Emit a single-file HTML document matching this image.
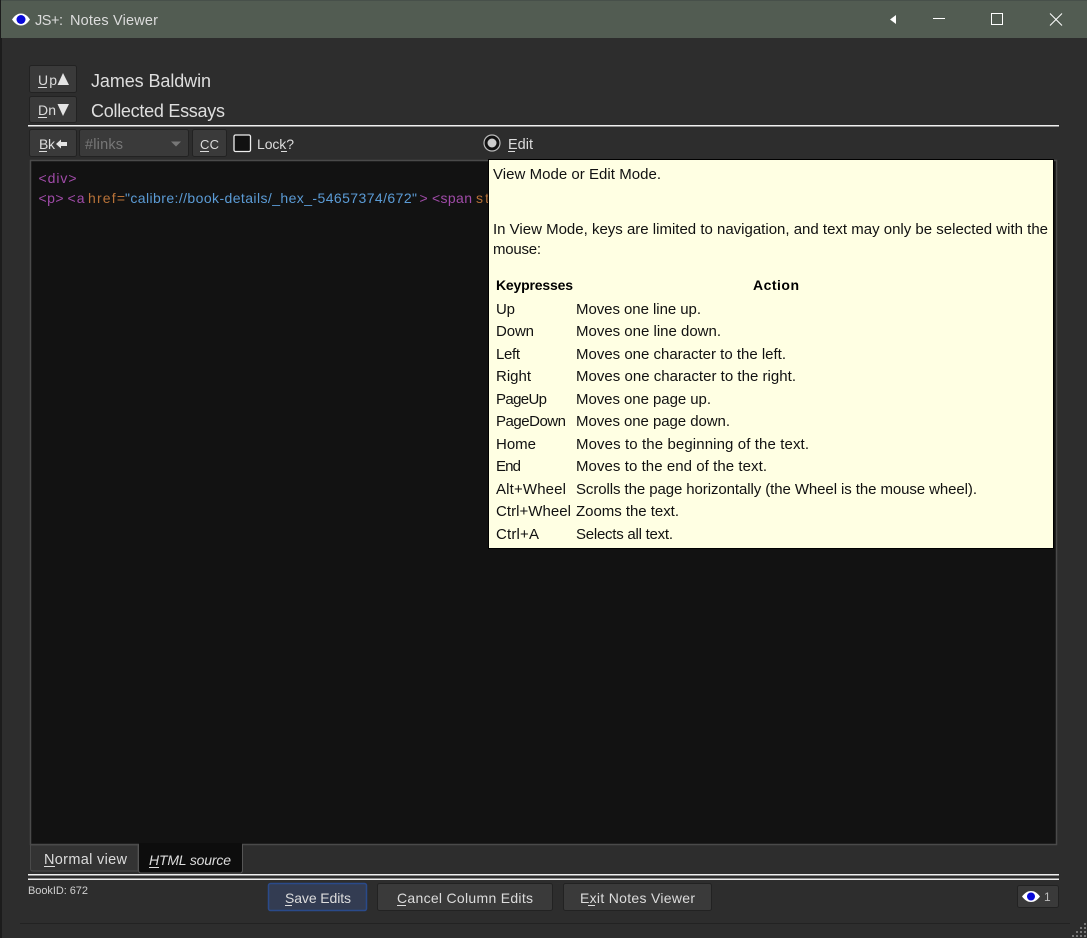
<!DOCTYPE html>
<html><head><meta charset="utf-8"><style>
html,body{margin:0;padding:0;background:#2d2d2d;width:1087px;height:938px;overflow:hidden}
svg{display:block;position:absolute;left:0;top:0}
text{font-family:"Liberation Sans",sans-serif;white-space:pre}
.b{fill:#3a3a3a;stroke:#222;stroke-width:1}
.t{fill:#dcdcdc;font-size:14.500px}
.s{font-size:14px}
.k{fill:#111;font-size:15px}
.c{font-size:14px}
</style></head><body>
<svg width="1087" height="938" viewBox="0 0 1087 938" xmlns="http://www.w3.org/2000/svg">
<rect width="1087" height="938" fill="#2d2d2d"/>
<rect x="0" y="0" width="2" height="938" fill="#1c1c1c"/>
<rect x="1" y="0" width="1086" height="38" fill="#525c52"/>
<rect x="1" y="0" width="1086" height="1" fill="#47504a"/>
<!-- title eye -->
<path d="M12 19.500C15 15 18 13.500 21 13.500C24 13.500 27 15 30 19.500C27 24 24 25.500 21 25.500C18 25.500 15 24 12 19.500Z" fill="#fff"/><circle cx="21" cy="19.500" r="4.500" fill="#0808d8"/>
<text x="35" y="25" class="t" textLength="28" lengthAdjust="spacing">JS+:</text>
<text x="70" y="25" class="t" textLength="88" lengthAdjust="spacing">Notes Viewer</text>
<path d="M890 19.500L896 15V24Z" fill="#fff"/>
<rect x="933" y="18" width="12" height="1" fill="#fff"/>
<rect x="991.500" y="13.500" width="11" height="11" fill="none" stroke="#fff" stroke-width="1"/>
<path d="M1050 13.500L1062 25.500M1062 13.500L1050 25.500" stroke="#fff" stroke-width="1" fill="none"/>

<!-- top buttons -->
<rect class="b" x="29.500" y="65.500" width="47" height="27" rx="2"/>
<text x="38" y="85" class="t s" textLength="19" lengthAdjust="spacing">Up</text><rect x="38" y="87" width="9" height="1" fill="#dcdcdc"/>
<path d="M57.500 85L63 73L69 85Z" fill="#e4e4e4"/>
<rect class="b" x="29.500" y="96.500" width="47" height="26" rx="2"/>
<text x="38" y="115" class="t s" textLength="18" lengthAdjust="spacing">Dn</text><rect x="38" y="117" width="9" height="1" fill="#dcdcdc"/>
<path d="M57.500 104L69 104L63 116Z" fill="#e4e4e4"/>
<text x="91" y="87" fill="#dedede" font-size="18" textLength="120" lengthAdjust="spacing">James Baldwin</text>
<text x="91" y="117" fill="#dedede" font-size="18" textLength="134" lengthAdjust="spacing">Collected Essays</text>
<rect x="28" y="125" width="1031" height="1.500" fill="#f0f0f0"/>

<!-- toolbar -->
<rect class="b" x="29.500" y="129.500" width="47" height="27" rx="2"/>
<text x="39" y="149" class="t s" textLength="16" lengthAdjust="spacing">Bk</text><rect x="39" y="151" width="8" height="1" fill="#dcdcdc"/>
<path d="M56 144L61 139.500V142H67V146H61V148.500Z" fill="#e4e4e4"/>
<rect class="b" x="79.500" y="129.500" width="109" height="27" rx="2"/>
<text x="85" y="149" class="t" style="fill:#777" textLength="38" lengthAdjust="spacing">#links</text>
<path d="M171 141.500H181L176 146.500Z" fill="#777"/>
<rect class="b" x="192.500" y="129.500" width="34" height="27" rx="2"/>
<text x="200" y="149" class="t" style="font-size:13px" textLength="19" lengthAdjust="spacing">CC</text><rect x="200" y="151" width="9" height="1" fill="#dcdcdc"/>
<rect x="234" y="135" width="16.500" height="16.500" rx="1.500" fill="#111" stroke="#eee" stroke-width="1.300"/>
<text x="257" y="149" class="t s" textLength="37" lengthAdjust="spacing">Lock?</text><rect x="281" y="151" width="6" height="1" fill="#dcdcdc"/>
<circle cx="492" cy="143" r="8" fill="#111" stroke="#bbb" stroke-width="1.200"/><circle cx="492" cy="143" r="4.500" fill="#ccc"/>
<text x="508" y="149" class="t" textLength="25" lengthAdjust="spacing">Edit</text><rect x="508" y="151" width="7" height="1" fill="#dcdcdc"/>

<!-- editor -->
<rect x="30.500" y="160.500" width="1026" height="684" fill="#121212" stroke="#4a4a4a" stroke-width="1.500"/>
<text x="38.500" y="183" class="c" fill="#a04ba8" textLength="38" lengthAdjust="spacing">&lt;div&gt;</text>
<text x="38.500" y="203" class="c" fill="#a04ba8" textLength="25" lengthAdjust="spacing">&lt;p&gt;</text>
<text x="67.500" y="203" class="c" fill="#a04ba8" textLength="17" lengthAdjust="spacing">&lt;a</text>
<text x="88" y="203" class="c" fill="#b87238" textLength="37" lengthAdjust="spacing">href=</text>
<text x="125" y="203" class="c" fill="#5b9bd5" textLength="292" lengthAdjust="spacing">"calibre://book-details/_hex_-54657374/672"</text>
<text x="419.500" y="203" class="c" fill="#a04ba8" textLength="8" lengthAdjust="spacing">&gt;</text>
<text x="432" y="203" class="c" fill="#a04ba8" textLength="40" lengthAdjust="spacing">&lt;span</text>
<text x="476" y="203" class="c" fill="#b87238" textLength="13" lengthAdjust="spacing">st</text>

<!-- tooltip -->
<rect x="488.500" y="159.500" width="565" height="389" fill="#ffffe3" stroke="#000" stroke-width="1"/>
<text x="493" y="179" class="k" textLength="168" lengthAdjust="spacing">View Mode or Edit Mode.</text>
<text x="493" y="234" class="k" textLength="555" lengthAdjust="spacing">In View Mode, keys are limited to navigation, and text may only be selected with the</text>
<text x="493" y="254" class="k" textLength="48" lengthAdjust="spacing">mouse:</text>
<text x="496" y="290" class="k" font-weight="bold" style="font-size:14px;fill:#000" textLength="77" lengthAdjust="spacing">Keypresses</text>
<text x="753" y="290" class="k" font-weight="bold" style="font-size:14px;fill:#000" textLength="46" lengthAdjust="spacing">Action</text>
<text x="496" y="314" class="k" textLength="19" lengthAdjust="spacing">Up</text>
<text x="576" y="314" class="k" textLength="125" lengthAdjust="spacing">Moves one line up.</text>
<text x="496" y="336" class="k" textLength="38" lengthAdjust="spacing">Down</text>
<text x="576" y="336" class="k" textLength="145" lengthAdjust="spacing">Moves one line down.</text>
<text x="496" y="359" class="k" textLength="24" lengthAdjust="spacing">Left</text>
<text x="576" y="359" class="k" textLength="210" lengthAdjust="spacing">Moves one character to the left.</text>
<text x="496" y="381" class="k" textLength="35" lengthAdjust="spacing">Right</text>
<text x="576" y="381" class="k" textLength="220" lengthAdjust="spacing">Moves one character to the right.</text>
<text x="496" y="404" class="k" textLength="51" lengthAdjust="spacing">PageUp</text>
<text x="576" y="404" class="k" textLength="135" lengthAdjust="spacing">Moves one page up.</text>
<text x="496" y="426" class="k" textLength="70" lengthAdjust="spacing">PageDown</text>
<text x="576" y="426" class="k" textLength="154" lengthAdjust="spacing">Moves one page down.</text>
<text x="496" y="449" class="k" textLength="40" lengthAdjust="spacing">Home</text>
<text x="576" y="449" class="k" textLength="233" lengthAdjust="spacing">Moves to the beginning of the text.</text>
<text x="496" y="471" class="k" textLength="25" lengthAdjust="spacing">End</text>
<text x="576" y="471" class="k" textLength="191" lengthAdjust="spacing">Moves to the end of the text.</text>
<text x="496" y="494" class="k" textLength="70" lengthAdjust="spacing">Alt+Wheel</text>
<text x="576" y="494" class="k" textLength="401" lengthAdjust="spacing">Scrolls the page horizontally (the Wheel is the mouse wheel).</text>
<text x="496" y="516" class="k" textLength="75" lengthAdjust="spacing">Ctrl+Wheel</text>
<text x="576" y="516" class="k" textLength="103" lengthAdjust="spacing">Zooms the text.</text>
<text x="496" y="539" class="k" textLength="43" lengthAdjust="spacing">Ctrl+A</text>
<text x="576" y="539" class="k" textLength="97" lengthAdjust="spacing">Selects all text.</text>

<!-- tabs -->
<path d="M30.500 845V869Q30.500 871 33 871H138V845Z" fill="#333" stroke="#4a4a4a"/>
<text x="44" y="864" class="t" textLength="83" lengthAdjust="spacing">Normal view</text><rect x="44" y="866" width="11" height="1" fill="#dcdcdc"/>
<path d="M138.500 845V870Q138.500 873 141 873H240Q242.500 873 242.500 870V845Z" fill="#0d0d0d" stroke="#555"/>
<rect x="139" y="843" width="103" height="3" fill="#0d0d0d"/>
<text x="149" y="865" class="t s" font-style="italic" textLength="82" lengthAdjust="spacing">HTML source</text><rect x="149" y="867" width="10" height="1" fill="#dcdcdc"/>

<!-- separators -->
<rect x="28" y="874" width="1031" height="1.500" fill="#f0f0f0"/>
<rect x="28" y="878.500" width="1031" height="1.500" fill="#f0f0f0"/>
<text x="28" y="894" font-size="11" fill="#cfcfcf" textLength="60" lengthAdjust="spacing">BookID: 672</text>

<!-- bottom buttons -->
<rect x="268.500" y="883.500" width="98" height="27" rx="2" fill="#333c52" stroke="#2a4a8a" stroke-width="1.500"/>
<text x="285" y="903" class="t s" textLength="66" lengthAdjust="spacing">Save Edits</text><rect x="285" y="905" width="7" height="1" fill="#dcdcdc"/>
<rect class="b" x="377.500" y="883.500" width="175" height="27" rx="2"/>
<text x="397" y="903" class="t s" textLength="136" lengthAdjust="spacing">Cancel Column Edits</text><rect x="397" y="905" width="9" height="1" fill="#dcdcdc"/>
<rect class="b" x="563.500" y="883.500" width="148" height="27" rx="2"/>
<text x="580" y="903" class="t s" textLength="115" lengthAdjust="spacing">Exit Notes Viewer</text><rect x="588" y="905" width="7" height="1" fill="#dcdcdc"/>
<rect class="b" x="1017.500" y="885.500" width="41" height="22" rx="2"/>
<path d="M1022 896.500C1025 892.500 1028 891 1031 891C1034 891 1037 892.500 1040 896.500C1037 900.500 1034 902 1031 902C1028 902 1025 900.500 1022 896.500Z" fill="#fff"/><circle cx="1031" cy="896.500" r="4" fill="#0808d8"/>
<text x="1044" y="901" font-size="12" fill="#bdbdbd">1</text>

<rect x="20" y="923" width="1050" height="1" fill="#222"/>
<g fill="#777">
<rect x="1084" y="923" width="2" height="2"/>
<rect x="1080" y="927" width="2" height="2"/><rect x="1084" y="927" width="2" height="2"/>
<rect x="1076" y="931" width="2" height="2"/><rect x="1080" y="931" width="2" height="2"/><rect x="1084" y="931" width="2" height="2"/>
<rect x="1072" y="935" width="2" height="2"/><rect x="1076" y="935" width="2" height="2"/><rect x="1080" y="935" width="2" height="2"/><rect x="1084" y="935" width="2" height="2"/>
</g>
</svg>
</body></html>
